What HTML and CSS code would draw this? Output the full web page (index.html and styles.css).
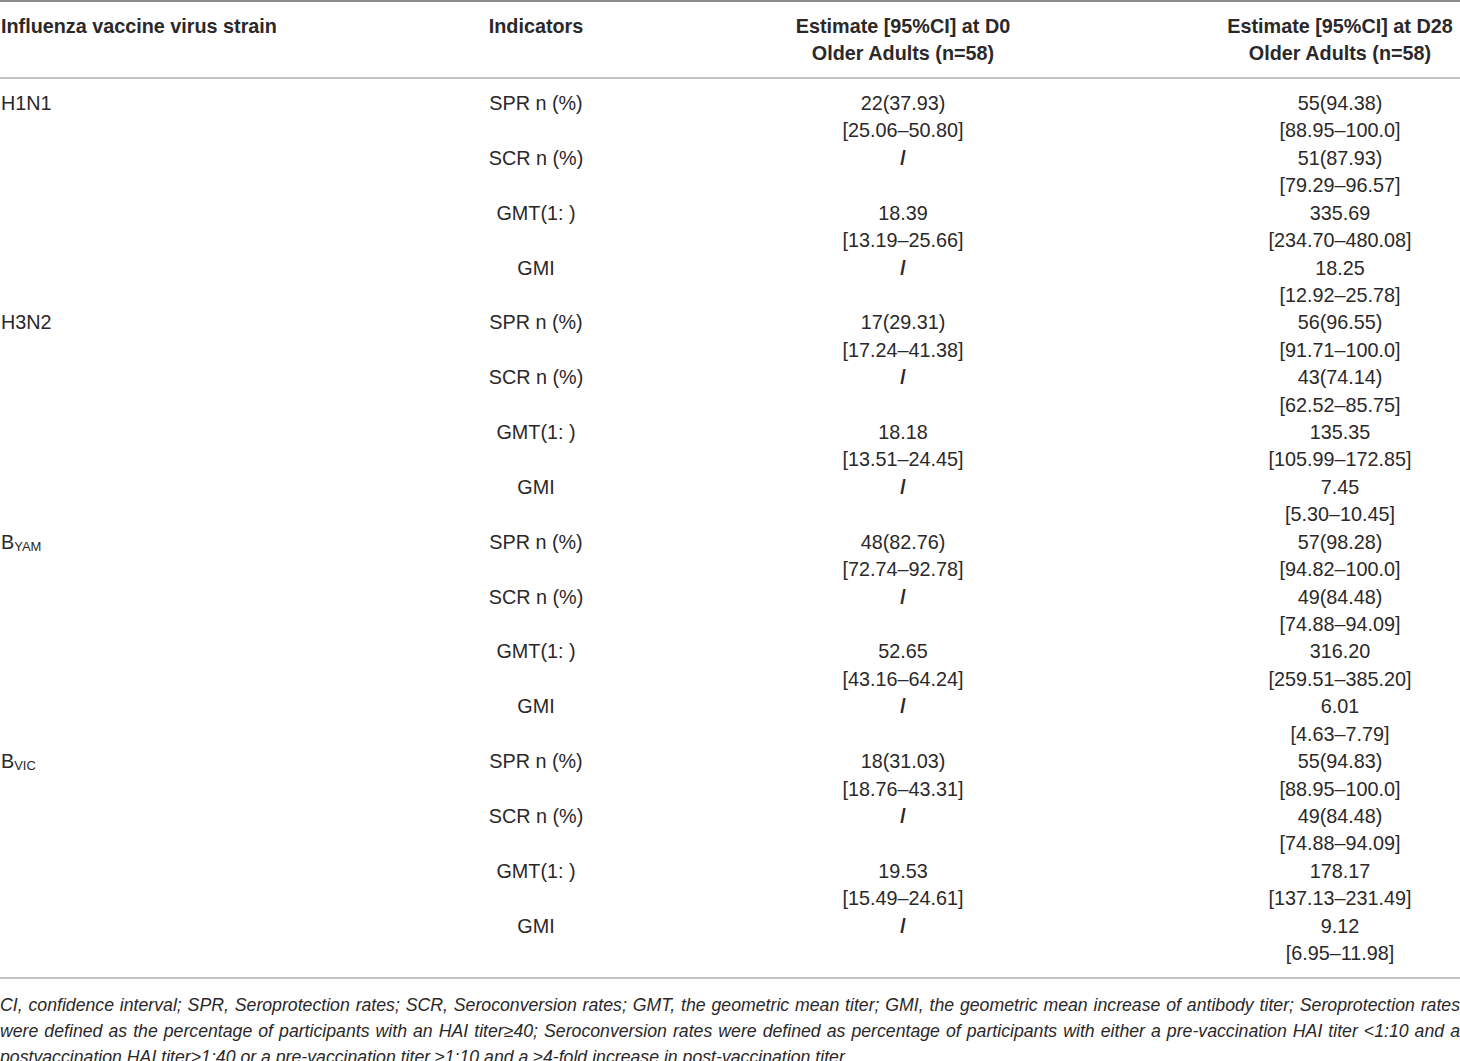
FILE: index.html
```html
<!doctype html>
<html lang="en">
<head>
    <meta charset="UTF-8">
    <link rel="stylesheet" href="styles.css">
    <title>Immunogenicity table</title>
</head>
<body>
<div class="sheet">
    <table class="results">
        <colgroup>
            <col class="c-strain">
            <col class="c-ind">
            <col class="c-d0">
            <col class="c-d28">
        </colgroup>
        <thead>
        <tr>
            <th class="left">Influenza vaccine virus strain</th>
            <th>Indicators</th>
            <th>Estimate [95%CI] at D0<br>Older Adults (n=58)</th>
            <th>Estimate [95%CI] at D28<br>Older Adults (n=58)</th>
        </tr>
        </thead>
        <tbody>
        <tr class="first">
            <td class="left">H1N1</td>
            <td>SPR n (%)</td>
            <td>22(37.93)<br>[25.06–50.80]</td>
            <td>55(94.38)<br>[88.95–100.0]</td>
        </tr>
        <tr>
            <td class="left"></td>
            <td>SCR n (%)</td>
            <td><span class="na">/</span></td>
            <td>51(87.93)<br>[79.29–96.57]</td>
        </tr>
        <tr>
            <td class="left"></td>
            <td>GMT(1: )</td>
            <td>18.39<br>[13.19–25.66]</td>
            <td>335.69<br>[234.70–480.08]</td>
        </tr>
        <tr>
            <td class="left"></td>
            <td>GMI</td>
            <td><span class="na">/</span></td>
            <td>18.25<br>[12.92–25.78]</td>
        </tr>
        <tr>
            <td class="left">H3N2</td>
            <td>SPR n (%)</td>
            <td>17(29.31)<br>[17.24–41.38]</td>
            <td>56(96.55)<br>[91.71–100.0]</td>
        </tr>
        <tr>
            <td class="left"></td>
            <td>SCR n (%)</td>
            <td><span class="na">/</span></td>
            <td>43(74.14)<br>[62.52–85.75]</td>
        </tr>
        <tr>
            <td class="left"></td>
            <td>GMT(1: )</td>
            <td>18.18<br>[13.51–24.45]</td>
            <td>135.35<br>[105.99–172.85]</td>
        </tr>
        <tr>
            <td class="left"></td>
            <td>GMI</td>
            <td><span class="na">/</span></td>
            <td>7.45<br>[5.30–10.45]</td>
        </tr>
        <tr>
            <td class="left">B<sub>YAM</sub></td>
            <td>SPR n (%)</td>
            <td>48(82.76)<br>[72.74–92.78]</td>
            <td>57(98.28)<br>[94.82–100.0]</td>
        </tr>
        <tr>
            <td class="left"></td>
            <td>SCR n (%)</td>
            <td><span class="na">/</span></td>
            <td>49(84.48)<br>[74.88–94.09]</td>
        </tr>
        <tr>
            <td class="left"></td>
            <td>GMT(1: )</td>
            <td>52.65<br>[43.16–64.24]</td>
            <td>316.20<br>[259.51–385.20]</td>
        </tr>
        <tr>
            <td class="left"></td>
            <td>GMI</td>
            <td><span class="na">/</span></td>
            <td>6.01<br>[4.63–7.79]</td>
        </tr>
        <tr>
            <td class="left">B<sub>VIC</sub></td>
            <td>SPR n (%)</td>
            <td>18(31.03)<br>[18.76–43.31]</td>
            <td>55(94.83)<br>[88.95–100.0]</td>
        </tr>
        <tr>
            <td class="left"></td>
            <td>SCR n (%)</td>
            <td><span class="na">/</span></td>
            <td>49(84.48)<br>[74.88–94.09]</td>
        </tr>
        <tr>
            <td class="left"></td>
            <td>GMT(1: )</td>
            <td>19.53<br>[15.49–24.61]</td>
            <td>178.17<br>[137.13–231.49]</td>
        </tr>
        <tr class="last">
            <td class="left"></td>
            <td>GMI</td>
            <td><span class="na">/</span></td>
            <td>9.12<br>[6.95–11.98]</td>
        </tr>
        </tbody>
    </table>

    <p class="notes">CI, confidence interval; SPR, Seroprotection rates; SCR, Seroconversion rates; GMT, the geometric mean titer; GMI, the geometric mean increase of antibody titer; Seroprotection rates were defined as the percentage of participants with an HAI titer≥40; Seroconversion rates were defined as percentage of participants with either a pre-vaccination HAI titer &lt;1:10 and a postvaccination HAI titer&gt;1:40 or a pre-vaccination titer ≥1:10 and a ≥4-fold increase in post-vaccination titer.</p>
</div>
</body>
</html>
```

FILE: styles.css
```css
body {
    margin: 0;
    background: #fff;
    color: #2b2829;
    font-family: "Liberation Sans", Arial, sans-serif;
}

.sheet {
    width: 1460px;
}

table.results {
    width: 1460px;
    table-layout: fixed;
    border-collapse: collapse;
    border-top: 2px solid #8c8c8c;
    border-bottom: 2px solid #c4c4c4;
    font-size: 19.8px;
}

.c-strain { width: 486px; }
.c-ind { width: 100px; }
.c-d0 { width: 634px; }
.c-d28 { width: 240px; }

table.results th {
    font-weight: bold;
    line-height: 27px;
    padding: 11px 0 10px;
    text-align: center;
    vertical-align: top;
    white-space: nowrap;
    border-bottom: 2px solid #c4c4c4;
}

table.results td {
    line-height: 27.42px;
    padding: 0;
    text-align: center;
    vertical-align: top;
    white-space: nowrap;
}

table.results .left {
    text-align: left;
    padding-left: 1px;
}

table.results tr.first td { padding-top: 11px; }
table.results tr.last td { padding-bottom: 9px; }

table.results sub {
    font-size: 13px;
    vertical-align: -2px;
    line-height: 0;
}

.na {
    font-weight: bold;
}

.notes {
    margin: 0;
    padding-top: 13px;
    font-style: italic;
    font-size: 17.7px;
    line-height: 26px;
    text-align: justify;
}
```
